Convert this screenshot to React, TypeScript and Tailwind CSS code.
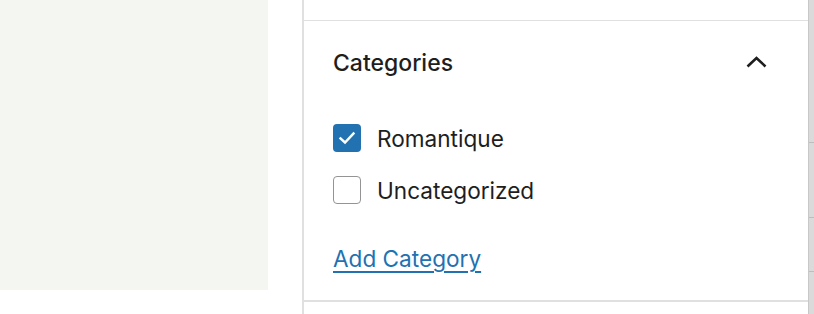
import { useState } from 'react';

const CATEGORIES = [
  { id: 'romantique', label: 'Romantique', checked: true },
  { id: 'uncategorized', label: 'Uncategorized', checked: false },
];

function Checkbox({ checked }: { checked: boolean }) {
  return (
    <span
      className={`flex h-[28px] w-[28px] shrink-0 items-center justify-center rounded-[4px] ${
        checked ? 'bg-[#2271b1]' : 'border-[1.5px] border-[#949494] bg-white'
      }`}
    >
      {checked && (
        <svg width="18" height="14" viewBox="0 0 18 14" fill="none">
          <path d="M2.5 7.5 L7 11.5 L15.5 2.5" stroke="white" strokeWidth="2.4" strokeLinecap="square" />
        </svg>
      )}
    </span>
  );
}

export default function App() {
  const [cats, setCats] = useState(CATEGORIES);

  return (
    <div
      className="flex h-[314px] w-[814px] overflow-hidden bg-white text-[#1e1e1e]"
      style={{ fontFamily: 'Inter, "Liberation Sans", sans-serif' }}
    >
      {/* ── Canvas area ─────────────────────────────────────────── */}
      <div className="w-[268px] shrink-0">
        <div className="h-[290px] bg-[#f4f6f1]" />
      </div>
      <div className="w-[34px] shrink-0" />

      {/* ── Sidebar ─────────────────────────────────────────────── */}
      <div className="flex w-[506px] shrink-0 flex-col border-l-2 border-[#e0e0e0]">
        <div className="h-[21px] shrink-0 border-b border-[#e0e0e0]" />

        <div className="flex h-[281px] shrink-0 flex-col border-b-2 border-[#e0e0e0] pl-[29px] pr-[40px]">
          <div className="flex h-[84px] items-center justify-between pt-[1px]">
            <h2 className="text-[23px] font-medium leading-none">Categories</h2>
            <svg width="21" height="12" viewBox="0 0 21 12" fill="none" className="mr-[1px] mb-[3px]">
              <path d="M1.5 10.5 L10.5 2 L19.5 10.5" stroke="#1e1e1e" strokeWidth="2.6" />
            </svg>
          </div>

          <ul className="mt-[19px] flex flex-col gap-[24px]">
            {cats.map((c) => (
              <li
                key={c.id}
                className="flex h-[28px] cursor-pointer items-center gap-[16px]"
                onClick={() =>
                  setCats((prev) => prev.map((p) => (p.id === c.id ? { ...p, checked: !p.checked } : p)))
                }
              >
                <Checkbox checked={c.checked} />
                <span className="pt-[2px] text-[22.6px] leading-none">{c.label}</span>
              </li>
            ))}
          </ul>

          <a
            href="#"
            className="mt-[41px] self-start text-[22.6px] leading-[28px] text-[#2271b1] underline decoration-[1.5px] underline-offset-[4px]"
          >
            Add Category
          </a>
        </div>
      </div>

      {/* ── Scrollbar ───────────────────────────────────────────── */}
      <div className="flex w-[6px] shrink-0 flex-col border-l border-[#c8c8c8] bg-[#dadada]">
        <div className="h-[143px] border-b border-[#bdbdbd]" />
        <div className="h-[75px] border-b border-[#bdbdbd]" />
        <div className="h-[54px] border-b border-[#bdbdbd]" />
      </div>
    </div>
  );
}
